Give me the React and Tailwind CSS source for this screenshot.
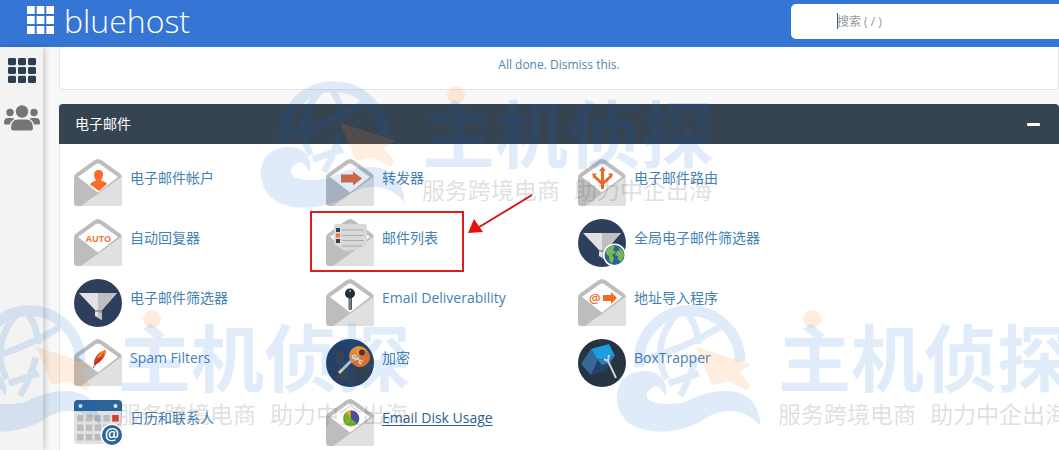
import { useState } from 'react';

function Envelope({ children }) {
  return (
    <svg viewBox="0 0 48 48" className="size-12 shrink-0" aria-hidden="true">
      <path d="M0 18Q0 16 2 14.500L20 1.500Q24-1.500 28 1.500L46 14.500Q48 16 48 18V44Q48 47 45 47H3Q0 47 0 44Z" fill="#bdbdbd" />
      <path d="M22 5Q24 4 26 5L44 18 24 33.500 4 18Z" fill="#fff" />
      <path d="M7 47L48 17.500V44Q48 47 45 47Z" fill="#e0e0e0" />
      {children}
    </svg>
  );
}

function AccountIcon() {
  return (
    <Envelope>
      <path d="M24.500 11C28 11 29.500 13 29 16.500 28.500 19 27.500 20.500 27 21.500 30 22.500 32.500 23 33 25L25 32 16 25.500C17 23 20 22.500 22 21.500 21 20 20 18 20 15.500 20 12.500 22 11 24.500 11Z" fill="#fb6c2b" />
    </Envelope>
  );
}

function ForwardIcon() {
  return (
    <Envelope>
      <path d="M15 15.500H27V12.500L36 19.500 27 26.500V23.500H15Z" fill="#e86a36" />
    </Envelope>
  );
}

function RoutingIcon() {
  return (
    <Envelope>
      <path d="M24.500 30V12M24.500 25L16.500 17.500M24.500 25L32.500 17.500" stroke="#f0692c" strokeWidth="3" fill="none" />
      <path d="M21 12L24.500 7.500 28 12ZM14 14.500L19 14.500 15.500 19.500ZM35 14.500L30 14.500 33.500 19.500Z" fill="#f0692c" />
    </Envelope>
  );
}

function AutoIcon() {
  return (
    <Envelope>
      <text x="24.500" y="22.500" textAnchor="middle" fontSize="9" fontWeight="700" fontFamily="Open Sans, sans-serif" fill="#ee7a3b">AUTO</text>
    </Envelope>
  );
}

function ListIcon() {
  return (
    <Envelope>
      <path d="M8 7Q8 5 10 5H39Q41 5 41 7V25L33 31 24 33 17 31 8 25Z" fill="#d9d9d9" />
      <path d="M16 11H38M16 16.500H38M16 21.500H38M16 27H36M22 32H28" stroke="#ababab" strokeWidth="1.200" />
      <path d="M10 9H14V13H10ZM10 20H14V24H10Z" fill="#2f4158" />
      <path d="M10 14.500H14V18.500H10Z" fill="#f07a2e" />
    </Envelope>
  );
}

function KeyIcon() {
  return (
    <Envelope>
      <rect x="22.500" y="17" width="3.500" height="14" rx="1.500" fill="#55585c" />
      <path d="M24 19V30" stroke="#aaa" strokeWidth="0.800" />
      <circle cx="24" cy="14.500" r="5" fill="#232f3b" />
      <circle cx="24" cy="12" r="1.200" fill="#8b949c" />
    </Envelope>
  );
}

function ImportIcon() {
  return (
    <Envelope>
      <text x="11" y="23.500" fontSize="13" fontWeight="600" fontFamily="Open Sans, sans-serif" fill="#ee6a28">@</text>
      <path d="M25 16H33V13L39 19 33 25V22H25Z" fill="#f36b22" />
    </Envelope>
  );
}

function FeatherIcon() {
  return (
    <Envelope>
      <path d="M20 26C19 20 24 12 32 11 32 17 27 24 20 26Z" fill="#d63a22" />
      <path d="M23 19C25 14 28 12 32 11 32 14 30 16 28 18Z" fill="#f58b2e" />
      <path d="M19 29L30 14" stroke="#8f2a22" strokeWidth="0.900" />
    </Envelope>
  );
}

function DiskIcon() {
  return (
    <Envelope>
      <circle cx="25" cy="19.500" r="8" fill="#74b62e" />
      <path d="M25 19.500V11.500A8 8 0 0 1 31 25Z" fill="#4b4f9c" />
      <path d="M25 19.500L20 13A8 8 0 0 1 25 11.500Z" fill="#eda12f" />
    </Envelope>
  );
}

function Funnel() {
  return (
    <>
      <circle cx="24" cy="24" r="24" fill="#2e3f5c" />
      <path d="M5 14H43L28 31V41L21 37V31Z" fill="#e2e2e2" />
      <path d="M24 14H43L28 31V41L24 39Z" fill="#bfbfbf" />
      <path d="M21 31H28V34L21 32.500Z" fill="#999" />
    </>
  );
}

function FilterIcon() {
  return (
    <svg viewBox="0 0 48 48" className="size-12 shrink-0" aria-hidden="true">
      <Funnel />
    </svg>
  );
}

function GlobalFilterIcon() {
  return (
    <svg viewBox="0 0 48 48" className="size-12 shrink-0" aria-hidden="true">
      <Funnel />
      <circle cx="36.500" cy="36" r="11.500" fill="#fff" />
      <circle cx="36.500" cy="36" r="10" fill="#2b6591" />
      <path d="M28 31Q32 26 37 27L35 31 38 33 34 36 36 39 34 45 31 41 31 37 28 35Z" fill="#7ab55c" />
      <path d="M40 28Q46 31 46 37L43 43 40 40 40 37 37 36 39 32 42 31Z" fill="#7ab55c" />
    </svg>
  );
}

function EncryptIcon() {
  return (
    <svg viewBox="0 0 48 48" className="size-12 shrink-0" aria-hidden="true">
      <circle cx="24" cy="24" r="24" fill="#263f66" />
      <path d="M10 12H18V26H10ZM12 28H22V44L10 39Z" fill="#354558" />
      <path d="M31 8L41 8 47 18Q49 30 41 39L29 46 20 44 27 25Z" fill="#33404f" />
      <path d="M13 34L27 20" stroke="#c9cdcf" strokeWidth="3" />
      <path d="M15 34L27 22" stroke="#7d8791" strokeWidth="1" />
      <circle cx="33" cy="17" r="10" fill="#f0922f" />
      <path d="M26 24A10 10 0 0 0 42 12Z" fill="#e9702b" />
      <circle cx="36" cy="13.500" r="3" fill="#3f3a3f" />
      <text x="25" y="18" fontSize="6" fontWeight="700" fontFamily="Open Sans, sans-serif" fill="#fff" transform="rotate(38 25 18)">GPG</text>
    </svg>
  );
}

function TrapperIcon() {
  return (
    <svg viewBox="0 0 48 48" className="size-12 shrink-0" aria-hidden="true">
      <circle cx="24" cy="24" r="24" fill="#243440" />
      <path d="M13 10L3 25 13 36 20 21Z" fill="#36689a" />
      <path d="M13 10L31 5 37 17 20 21Z" fill="#1c9ddd" />
      <path d="M20 21L37 17 28 32 13 36Z" fill="#23416b" />
      <path d="M20 21L37 17 31 24 24 26Z" fill="#2880bd" />
      <path d="M38 39L30 22M26 20L30 22 31 16" stroke="#cdd1d3" strokeWidth="2" fill="none" />
    </svg>
  );
}

function CalendarIcon() {
  const cells = [0, 1, 2, 3, 4].flatMap((c) => [0, 1, 2].map((r) => ({ c, r })));
  return (
    <svg viewBox="0 0 48 48" className="size-12 shrink-0" aria-hidden="true">
      <rect y="1" width="48" height="44" rx="4" fill="#e1e1e1" />
      <path d="M0 12V5Q0 1 4 1H44Q48 1 48 5V12Z" fill="#2b6498" />
      <circle cx="6.500" cy="7" r="2" fill="#e6edf3" />
      <circle cx="41.500" cy="7" r="2" fill="#e6edf3" />
      {cells.map(({ c, r }) => (
        <rect key={`${c}-${r}`} x={3 + c * 8.800} y={16 + r * 9.500} width="6.500" height="6.500" fill={c === 4 && r < 2 ? '#d2432f' : '#bcbcbc'} />
      ))}
      <circle cx="38" cy="36" r="11.500" fill="#fff" />
      <circle cx="38" cy="36" r="10" fill="#2b6498" />
      <text x="38" y="40.500" textAnchor="middle" fontSize="16" fontWeight="600" fontFamily="Open Sans, sans-serif" fill="#fff">@</text>
    </svg>
  );
}

const items = [
  { label: '电子邮件帐户', Icon: AccountIcon },
  { label: '转发器', Icon: ForwardIcon },
  { label: '电子邮件路由', Icon: RoutingIcon },
  { label: '自动回复器', Icon: AutoIcon },
  { label: '邮件列表', Icon: ListIcon, marked: true },
  { label: '全局电子邮件筛选器', Icon: GlobalFilterIcon },
  { label: '电子邮件筛选器', Icon: FilterIcon },
  { label: 'Email Deliverability', Icon: KeyIcon },
  { label: '地址导入程序', Icon: ImportIcon },
  { label: 'Spam Filters', Icon: FeatherIcon },
  { label: '加密', Icon: EncryptIcon },
  { label: 'BoxTrapper', Icon: TrapperIcon },
  { label: '日历和联系人', Icon: CalendarIcon },
  { label: 'Email Disk Usage', Icon: DiskIcon, active: true },
];

function GridIcon({ className, radius }) {
  return (
    <svg viewBox="0 0 28 28" preserveAspectRatio="none" className={className} fill="currentColor" aria-hidden="true">
      {[0, 10, 20].map((y) => [0, 10, 20].map((x) => <rect key={`${x}-${y}`} x={x} y={y} width="8" height="8" rx={radius} />))}
    </svg>
  );
}

function UsersIcon() {
  return (
    <svg viewBox="0 0 36 26" className="h-[26px] w-9" fill="currentColor" aria-hidden="true">
      <circle cx="18" cy="6.500" r="6.200" />
      <circle cx="6" cy="7.500" r="3.700" />
      <circle cx="30" cy="7.500" r="3.700" />
      <path d="M7 23Q7 14.500 14 14.500H22Q29 14.500 29 23 29 25.500 26.500 25.500H9.500Q7 25.500 7 23Z" />
      <path d="M0 18Q0 13 4 13H8Q10 13 10.500 14 6.500 16 6 19.500H1.500Q0 19.500 0 18Z" />
      <path d="M36 18Q36 13 32 13H28Q26 13 25.500 14 29.500 16 30 19.500H34.500Q36 19.500 36 18Z" />
    </svg>
  );
}

function Watermark({ className }) {
  return (
    <div className={`absolute flex w-[470px] items-start ${className}`}>
      <svg viewBox="0 0 474 420" className="h-[140px] w-[158px] shrink-0">
        <g opacity="0.12" fill="#005fd2" stroke="#005fd2">
          <path d="M101 218A151 151 0 1 1 402 202" fill="none" strokeWidth="32" />
          <path d="M105 197Q230 168 340 100M212 60Q160 120 162 190 166 225 182 255M244 55Q276 100 276 150M188 268L278 238M270 190Q250 260 222 305" fill="none" strokeWidth="20" />
          <path d="M182 288Q172 226 107 231 32 241 32 315 42 411 162 413 242 411 302 371 392 320 464 396 454 286 352 291 302 291 232 326 162 336 132 321 112 301 132 286 157 261 177 306Z" stroke="none" />
        </g>
        <path d="M270 158L436 212 400 235 434 274 421 290 370 262 318 272Z" fill="#ff821e" opacity="0.14" />
      </svg>
      <div className="relative ml-[14px] shrink-0">
        <span className="absolute left-[25px] top-4 size-[18px] rounded-full bg-[#ff821e]/15" />
        <div className="mt-6 whitespace-nowrap text-[73px] leading-[80px] font-bold text-[#005fd2]/12">主机侦探</div>
        <div className="mt-[2px] flex gap-[14px] whitespace-nowrap text-[23px] leading-7 text-[#3c3c3c]/18">
          <span>服务跨境电商</span>
          <span>助力中企出海</span>
        </div>
      </div>
    </div>
  );
}

function FeatureItem({ item }) {
  const { label, Icon, marked, active } = item;
  return (
    <li className="relative h-[60px]">
      <a href="#" className="inline-flex items-start gap-2 text-sm leading-5 text-[#4482b4]">
        <Icon />
        <span className={active ? 'mt-[9px] text-[#2d5f8c] underline underline-offset-2' : 'mt-[9px]'}>{label}</span>
      </a>
      {marked && (
        <>
          <span className="pointer-events-none absolute -left-4 -top-2 h-[61px] w-[154px] border-2 border-[#e01b1b]" />
          <svg viewBox="0 0 66 42" className="pointer-events-none absolute -top-[25px] left-[142px] h-[42px] w-[66px]">
            <path d="M64 1L8 35" stroke="#d01818" strokeWidth="2" />
            <path d="M0 39L6 25 15 38Z" fill="#e80f0f" />
          </svg>
        </>
      )}
    </li>
  );
}

export default function App() {
  const [open, setOpen] = useState(true);
  const [query, setQuery] = useState('');

  return (
    <div className="relative flex h-screen flex-col overflow-hidden bg-[#f8f8f8] font-['Open_Sans','Noto_Sans_CJK_SC',sans-serif]">
      <header className="flex h-[47px] shrink-0 items-start justify-between bg-[#3575d3]">
        <a href="#" className="flex items-start pl-[27px] text-white">
          <GridIcon className="mt-[6px] h-7 w-[27px]" radius={0} />
          <span className="ml-[10px] text-[32px] leading-[42px] font-light">bluehost</span>
        </a>
        <label className="relative mt-1 block w-[268px]">
          <span className="sr-only">搜索</span>
          <input
            type="text"
            value={query}
            onChange={(e) => setQuery(e.target.value)}
            placeholder="搜索 ( / )"
            className="h-[35px] w-full rounded-l-[5px] bg-white pl-[46px] text-xs text-gray-700 outline-none placeholder:text-[#999]"
          />
          <span className="absolute left-[46px] top-[9px] h-4 w-px bg-[#2b5f96]" />
        </label>
      </header>

      <div className="flex min-h-0 flex-1">
        <nav className="flex w-[43px] shrink-0 flex-col items-center bg-[#f3f3f3] pt-[11px] shadow-[2px_0_6px_rgba(0,0,0,0.2)]">
          <button type="button" aria-label="Tools" className="text-[#2c3e50]">
            <GridIcon className="h-[25px] w-7" radius={1.5} />
          </button>
          <button type="button" aria-label="Users" className="mt-[22px] text-[#757575]">
            <UsersIcon />
          </button>
        </nav>

        <main className="flex min-w-0 flex-1 flex-col pl-4">
          <div className="h-[43px] shrink-0 rounded-b border border-t-0 border-[#e4e4e4] bg-white pt-2 text-center text-xs leading-5">
            <a href="#" className="text-[#5585ab]">All done. Dismiss this.</a>
          </div>

          <section className="mt-[14px] flex-1 border-l border-[#e8e8e8] bg-white">
            <div className="-ml-px flex h-10 items-center justify-between rounded-t bg-[#364452] px-4">
              <h2 className="text-sm text-white">电子邮件</h2>
              <button type="button" aria-label="Toggle" onClick={() => setOpen(!open)} className="flex h-6 w-5 items-center justify-center">
                <span className="h-[3px] w-[13px] shrink-0 rounded-[1px] bg-white" />
              </button>
            </div>
            {open && (
              <ul className="grid grid-cols-[repeat(auto-fill,252px)] pl-[14px] pt-[15px]">
                {items.map((item) => (
                  <FeatureItem key={item.label} item={item} />
                ))}
              </ul>
            )}
          </section>
        </main>
      </div>

      <div className="pointer-events-none absolute inset-0 overflow-hidden select-none" aria-hidden="true">
        <Watermark className="left-[250px] top-[70px]" />
        <Watermark className="-left-[54px] top-[294px]" />
        <Watermark className="left-[606px] top-[294px]" />
      </div>
    </div>
  );
}
